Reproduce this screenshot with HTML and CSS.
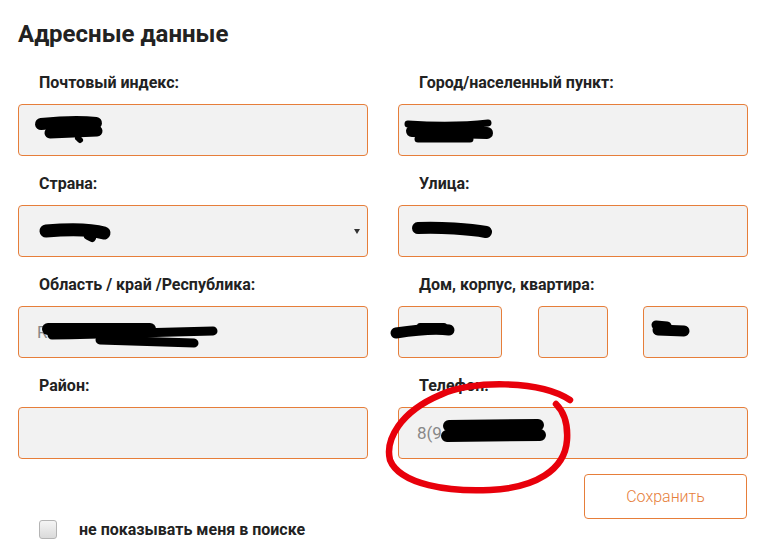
FILE: index.html
```html
<!DOCTYPE html>
<html lang="ru">
<head>
<meta charset="utf-8">
<title>Адресные данные</title>
<link rel="stylesheet" href="styles.css">
</head>
<body>
<div class="page">
  <h2 class="title">Адресные данные</h2>
  <div class="grid">
    <div class="field">
      <div class="label">Почтовый индекс:</div>
      <div class="input"></div>
    </div>
    <div class="field">
      <div class="label">Город/населенный пункт:</div>
      <div class="input"></div>
    </div>
    <div class="field">
      <div class="label">Страна:</div>
      <div class="input select"></div>
    </div>
    <div class="field">
      <div class="label">Улица:</div>
      <div class="input"></div>
    </div>
    <div class="field">
      <div class="label">Область / край /Республика:</div>
      <div class="input"><span class="value">R</span></div>
    </div>
    <div class="field">
      <div class="label">Дом, корпус, квартира:</div>
      <div class="house">
        <div class="input h1"></div>
        <div class="input h2"></div>
        <div class="input h3"></div>
      </div>
    </div>
    <div class="field">
      <div class="label">Район:</div>
      <div class="input"></div>
    </div>
    <div class="field">
      <div class="label">Телефон:</div>
      <div class="input"><span class="value">8(9</span></div>
    </div>
  </div>
  <div class="actions">
    <button class="save" type="button">Сохранить</button>
  </div>
  <label class="check"><span class="box"></span><span>не показывать меня в поиске</span></label>

  <svg class="overlay" width="762" height="554" viewBox="0 0 762 554" aria-hidden="true">
    <g stroke="#000" stroke-linecap="round" fill="none">
      <path d="M41 124 C60 122 80 121 96 123" stroke-width="12"/>
      <path d="M50 133 L97 131" stroke-width="11"/>
      <path d="M78 138 L80 140" stroke-width="6"/>
      <path d="M46 231 C70 229 90 229 104 233" stroke-width="13"/>
      <path d="M88 236 L92 238" stroke-width="8"/>
      <path d="M48 329 L150 329" stroke-width="12"/>
      <path d="M52 335 C110 334 170 332 213 331" stroke-width="9"/>
      <path d="M100 340 L194 343" stroke-width="9"/>
      <path d="M408 124 C440 126 470 125 488 123" stroke-width="7"/>
      <path d="M412 131 L487 133" stroke-width="12"/>
      <path d="M418 139 L470 139" stroke-width="7"/>
      <path d="M418 228 C440 227 470 229 486 232" stroke-width="12"/>
      <path d="M396 333 C415 330 435 328 449 330" stroke-width="11"/>
      <path d="M420 326 L444 326" stroke-width="6"/>
      <path d="M656 325 L667 326" stroke-width="9"/>
      <path d="M658 330 L684 331" stroke-width="11"/>
      <path d="M449 426 L538 425" stroke-width="12"/>
      <path d="M447 436 L540 435" stroke-width="12"/>
    </g>
    <path d="M570 400 C540 380 470 380 440 395 C400 412 385 440 390 460 C400 485 450 492 490 490 C535 488 565 470 567 440 C568 425 564 412 556 404" stroke="#e8000b" stroke-width="6.5" fill="none" stroke-linecap="round"/>
  </svg>
</div>
</body>
</html>
```
FILE: styles.css
```css
html, body {
  margin: 0;
  padding: 0;
  background: #fff;
}
body {
  font-family: Roboto, "Liberation Sans", Arial, sans-serif;
  color: #222;
}
.page {
  position: relative;
  width: 762px;
  height: 554px;
  box-sizing: border-box;
  padding: 19px 14px 0 18px;
  overflow: hidden;
}
.title {
  margin: 0;
  font-size: 24px;
  line-height: 30px;
  font-weight: 700;
  color: #222;
}
.grid {
  margin-top: 24px;
  display: grid;
  grid-template-columns: 350px 350px;
  column-gap: 30px;
  row-gap: 18px;
}
.label {
  padding-left: 21px;
  font-size: 16px;
  line-height: 20px;
  font-weight: 700;
  color: #222;
  margin-bottom: 11px;
}
.input {
  position: relative;
  height: 52px;
  box-sizing: border-box;
  border: 1px solid #e67e3a;
  border-radius: 4px;
  background: #f2f2f2;
  display: flex;
  align-items: center;
  padding-left: 18px;
}
.value {
  font-size: 17px;
  color: #888;
  font-weight: 400;
}
.select::after {
  content: "";
  position: absolute;
  right: 7px;
  top: 23px;
  border-left: 3px solid transparent;
  border-right: 3px solid transparent;
  border-top: 5px solid #333;
}
.house {
  display: flex;
  justify-content: space-between;
}
.h1 { width: 104px; }
.h2 { width: 70px; }
.h3 { width: 105px; }
.actions {
  display: flex;
  justify-content: flex-end;
  margin-top: 15px;
  padding-right: 1px;
}
.save {
  width: 163px;
  height: 45px;
  box-sizing: border-box;
  background: #fff;
  border: 1px solid #e67e3a;
  border-radius: 4px;
  font-family: Roboto, "Liberation Sans", Arial, sans-serif;
  font-size: 16px;
  font-weight: 300;
  color: #e67e3a;
  padding: 0;
}
.check {
  display: flex;
  align-items: center;
  gap: 22px;
  margin-top: 1px;
  padding-left: 21px;
  font-size: 16px;
  font-weight: 700;
  color: #222;
}
.box {
  width: 18px;
  height: 19px;
  box-sizing: border-box;
  border: 1px solid #b4b4b4;
  border-radius: 3px;
  background: linear-gradient(#f5f5f5, #dadada);
}
.overlay {
  position: absolute;
  left: 0;
  top: 0;
  pointer-events: none;
}
```
